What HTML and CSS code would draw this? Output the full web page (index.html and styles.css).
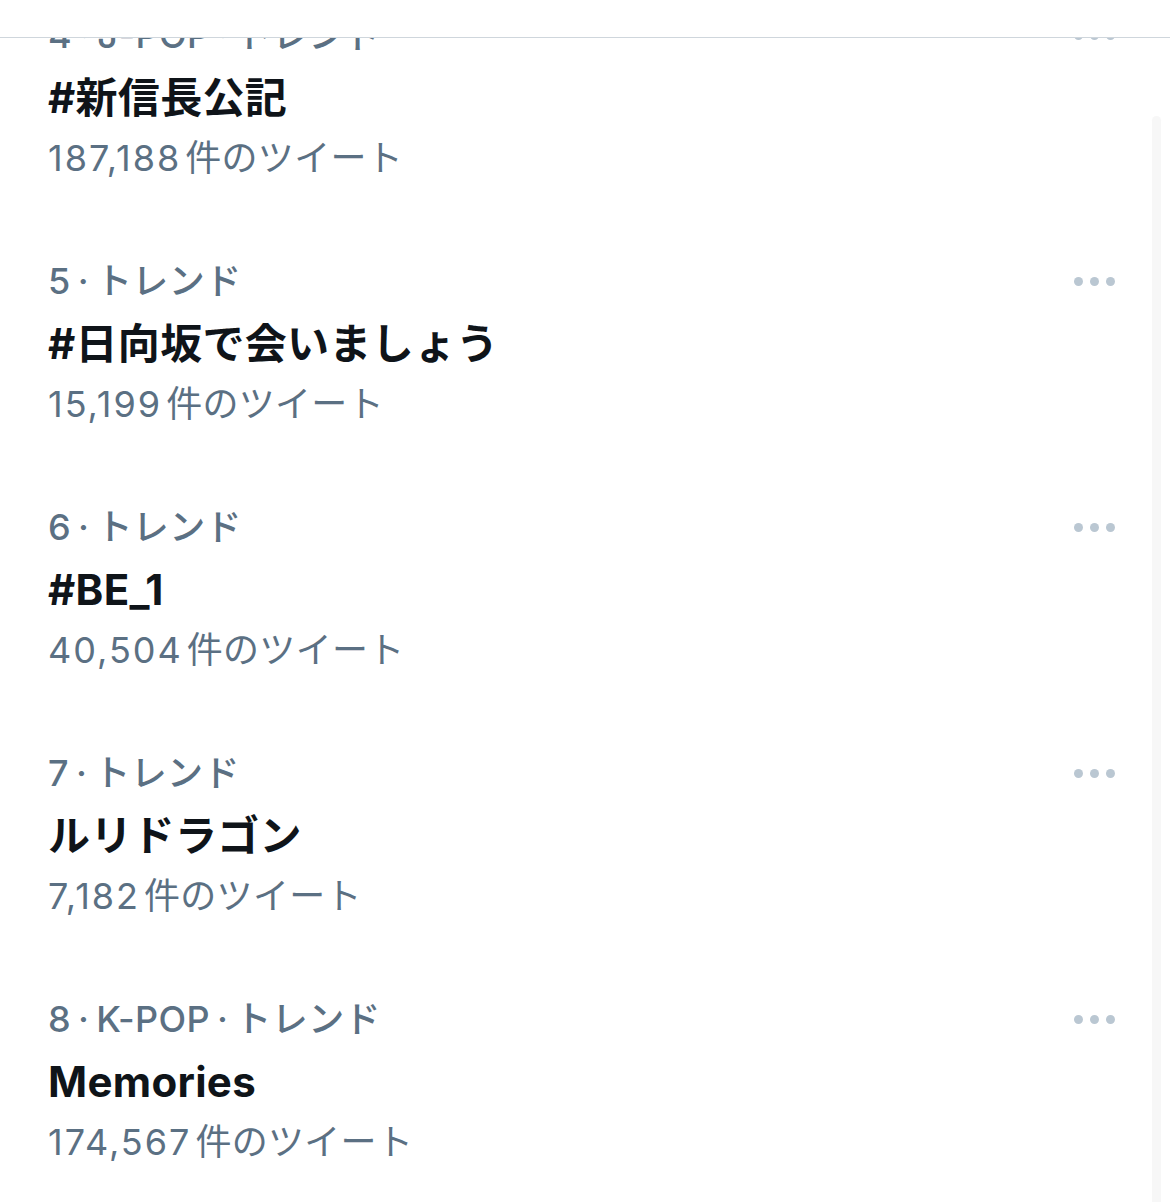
FILE: index.html
```html
<!DOCTYPE html>
<html lang="ja">
<head>
  <meta charset="UTF-8">
  <title>トレンド</title>
  <link rel="stylesheet" href="styles.css">
</head>
<body>
  <div class="screen">
    <div class="top-bar"></div>

    <div class="viewport">
      <div class="scroll-thumb"></div>
      <div class="trend-list">

        <div class="trend">
          <div class="trend-meta">
            <span>4 · J-POP · トレンド</span>
            <div class="more"><i></i><i></i><i></i></div>
          </div>
          <div class="trend-title">#新信長公記</div>
          <div class="trend-count"><span class="num">187,188</span>件のツイート</div>
        </div>

        <div class="trend">
          <div class="trend-meta">
            <span>5 · トレンド</span>
            <div class="more"><i></i><i></i><i></i></div>
          </div>
          <div class="trend-title">#日向坂で会いましょう</div>
          <div class="trend-count"><span class="num">15,199</span>件のツイート</div>
        </div>

        <div class="trend">
          <div class="trend-meta">
            <span>6 · トレンド</span>
            <div class="more"><i></i><i></i><i></i></div>
          </div>
          <div class="trend-title">#BE_1</div>
          <div class="trend-count"><span class="num">40,504</span>件のツイート</div>
        </div>

        <div class="trend">
          <div class="trend-meta">
            <span>7 · トレンド</span>
            <div class="more"><i></i><i></i><i></i></div>
          </div>
          <div class="trend-title">ルリドラゴン</div>
          <div class="trend-count"><span class="num">7,182</span>件のツイート</div>
        </div>

        <div class="trend">
          <div class="trend-meta">
            <span>8 · K-POP · トレンド</span>
            <div class="more"><i></i><i></i><i></i></div>
          </div>
          <div class="trend-title">Memories</div>
          <div class="trend-count"><span class="num">174,567</span>件のツイート</div>
        </div>

      </div>
    </div>
  </div>
</body>
</html>
```

FILE: styles.css
```css
body { margin: 0; background: #fff; font-family: "Inter", "Noto Sans CJK JP", sans-serif; color: #0f1419; }
.screen { height: 1202px; display: flex; flex-direction: column; overflow: hidden; }
.top-bar { height: 37px; flex: none; border-bottom: 1px solid #cfd6dc; background: #fff; }
.viewport { flex: 1; position: relative; overflow: hidden; }
.scroll-thumb { position: absolute; top: 78px; right: 9px; width: 9px; height: 1200px; border-radius: 5px; background: #f7f7f7; }
.trend-list { margin-top: -63px; }
.trend { padding: 38px 55px 38px 48px; }
.trend-meta { display: flex; justify-content: space-between; align-items: center; height: 44px; font-size: 36px; line-height: 44px; font-weight: 500; color: #5b7083; word-spacing: -3px; letter-spacing: 0.4px; }
.more { display: flex; gap: 7px; }
.more i { width: 9px; height: 9px; border-radius: 50%; background: #bac7d2; }
.trend-title { margin-top: 11px; font-size: 42px; line-height: 60px; font-weight: 700; letter-spacing: 0.3px; }
.trend-count { margin-top: 5px; font-size: 36px; line-height: 50px; color: #5b7083; letter-spacing: 0.3px; }
.trend-count .num { letter-spacing: 2px; margin-right: 4px; }
```
